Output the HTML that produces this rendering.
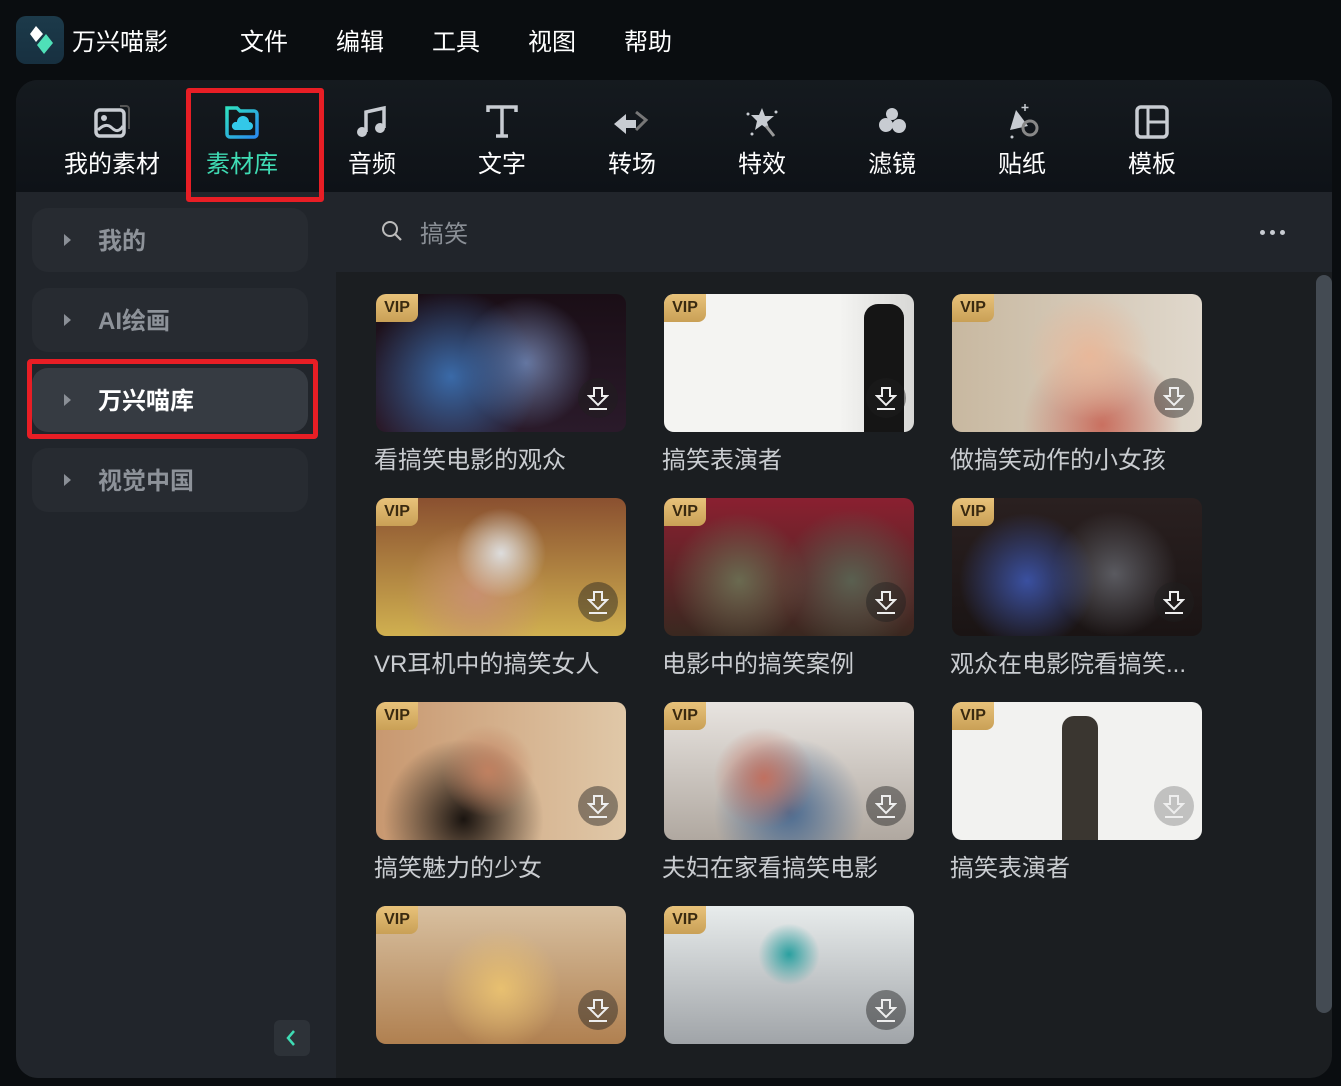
<!DOCTYPE html>
<html><head><meta charset="utf-8"><style>
*{margin:0;padding:0;box-sizing:border-box}
body{width:1341px;height:1086px;background:#0a0d10;font-family:"Liberation Sans","Noto Sans CJK SC",sans-serif;position:relative;overflow:hidden;color:#fff}
.abs{position:absolute}
.menu{top:22px;font-size:24px;color:#fff}
.panel{left:16px;top:80px;width:1316px;height:998px;border-radius:22px;overflow:hidden;background:#1b1e21}
.tool{left:0;top:0;width:1316px;height:112px;background:linear-gradient(#151a1f,#0e1217)}
.ti{position:absolute;top:0;width:120px;height:112px;text-align:center}
.ti svg{position:absolute;left:40px;top:22px}
.ti span{position:absolute;left:0;right:0;top:64px;font-size:24px;color:#fff}
.side{left:0;top:112px;width:320px;height:886px;background:#21252b}
.si{position:absolute;left:16px;width:276px;height:64px;border-radius:16px;background:#272b31}
.si i{position:absolute;left:32px;top:26px;width:0;height:0;border-left:7px solid #8a8f96;border-top:6px solid transparent;border-bottom:6px solid transparent}
.si b{position:absolute;left:66px;top:13px;font-size:24px;color:#8d9299}
.search{left:320px;top:112px;width:996px;height:80px;background:#21252b}
.card{position:absolute;width:250px;height:138px;border-radius:10px;overflow:hidden}
.vip{position:absolute;left:0;top:0;width:42px;height:28px;background:linear-gradient(#e8c27a,#c9a056);color:#3a2a10;font-weight:bold;font-size:16px;line-height:28px;text-align:center;border-radius:4px 0 8px 0}
.dl{position:absolute;right:8px;bottom:14px;width:40px;height:40px;border-radius:50%;background:rgba(30,30,30,.45)}
.dl svg{position:absolute;left:9px;top:8px}
.cap{position:absolute;font-size:24px;color:#c9ccd0;white-space:nowrap}
</style></head><body>
<div class="abs" style="left:16px;top:16px;width:48px;height:48px;border-radius:10px;background:linear-gradient(#1c3a4a,#173040)">
<svg width="48" height="48"><path d="M20 10 L27 18 L20 26 L14 18Z" fill="#fff"/><path d="M30 18 L37 27 L28 38 L21 29Z" fill="#4fe0b8"/></svg></div>
<div class="abs menu" style="left:72px">万兴喵影</div>
<div class="abs menu" style="left:240px">文件</div>
<div class="abs menu" style="left:336px">编辑</div>
<div class="abs menu" style="left:432px">工具</div>
<div class="abs menu" style="left:528px">视图</div>
<div class="abs menu" style="left:624px">帮助</div>

<div class="abs panel">
 <div class="abs tool">
  <div class="ti" style="left:36px"><svg width="40" height="40"><rect x="4" y="8" width="28" height="26" rx="4" fill="none" stroke="#c8ccd2" stroke-width="3.5"/><circle cx="12" cy="16" r="3" fill="#c8ccd2"/><path d="M6 28 Q14 20 20 26 T31 24" fill="none" stroke="#c8ccd2" stroke-width="3"/><path d="M28 4 h6 a3 3 0 0 1 3 3 v20" fill="none" stroke="#555" stroke-width="2"/></svg><span>我的素材</span></div>
  <div class="ti" style="left:166px"><svg width="40" height="40"><defs><linearGradient id="g" x1="0" y1="0" x2="1" y2="1"><stop offset="0" stop-color="#2ee0c0"/><stop offset="1" stop-color="#2a8af0"/></linearGradient></defs><path d="M5 6 h10 l3 3 h14 a3 3 0 0 1 3 3 v20 a3 3 0 0 1 -3 3 h-24 a3 3 0 0 1 -3 -3z" fill="none" stroke="url(#g)" stroke-width="3.5"/><path d="M13 28 h14 a4 4 0 0 0 0 -8 a6 6 0 0 0 -12 0 a4 4 0 0 0 -2 8z" fill="#33c8e8"/></svg><span style="color:#3fdcb4">素材库</span></div>
  <div class="ti" style="left:296px"><svg width="40" height="40"><path d="M14 30 V10 L32 6 V26" fill="none" stroke="#c8ccd2" stroke-width="3.5"/><circle cx="10" cy="30" r="5" fill="#c8ccd2"/><circle cx="28" cy="26" r="5" fill="#c8ccd2"/></svg><span>音频</span></div>
  <div class="ti" style="left:426px"><svg width="40" height="40"><path d="M6 10 V5 H34 V10 M20 5 V34 M14 34 H26" fill="none" stroke="#c8ccd2" stroke-width="3.5"/></svg><span>文字</span></div>
  <div class="ti" style="left:556px"><svg width="40" height="40"><path d="M2 22 L14 12 V18 H24 V26 H14 V32Z" fill="#c8ccd2"/><path d="M24 10 L34 18 L24 28" fill="none" stroke="#777" stroke-width="3"/></svg><span>转场</span></div>
  <div class="ti" style="left:686px"><svg width="40" height="40"><path d="M20 6 L23 14 L32 14 L25 20 L28 29 L20 23 L13 28 L15 19 L9 13 L17 13Z" fill="#c8ccd2"/><path d="M24 24 L32 34" stroke="#999" stroke-width="3"/><circle cx="6" cy="12" r="1.5" fill="#c8ccd2"/><circle cx="34" cy="10" r="1.5" fill="#c8ccd2"/><circle cx="10" cy="32" r="1.5" fill="#c8ccd2"/></svg><span>特效</span></div>
  <div class="ti" style="left:816px"><svg width="40" height="40"><circle cx="20" cy="12" r="6" fill="#c8ccd2"/><circle cx="14" cy="23" r="7" fill="#c8ccd2"/><circle cx="27" cy="24" r="7" fill="#c8ccd2"/></svg><span>滤镜</span></div>
  <div class="ti" style="left:946px"><svg width="40" height="40"><path d="M14 8 L26 24 L8 28Z" fill="#c8ccd2"/><circle cx="28" cy="26" r="7" fill="none" stroke="#888" stroke-width="3"/><circle cx="10" cy="35" r="1.5" fill="#c8ccd2"/><path d="M23 2 v7 M19.5 5.5 h7" stroke="#c8ccd2" stroke-width="1.5"/></svg><span>贴纸</span></div>
  <div class="ti" style="left:1076px"><svg width="40" height="40"><rect x="5" y="5" width="30" height="30" rx="4" fill="none" stroke="#c8ccd2" stroke-width="3.5"/><path d="M16 5 V35 M16 20 H35" stroke="#c8ccd2" stroke-width="3"/></svg><span>模板</span></div>
 </div>
 <div class="abs side">
  <div class="si" style="top:16px"><i></i><b>我的</b></div>
  <div class="si" style="top:96px"><i></i><b>AI绘画</b></div>
  <div class="si" style="top:176px;background:#363b42"><i></i><b style="color:#fff">万兴喵库</b></div>
  <div class="si" style="top:256px"><i></i><b>视觉中国</b></div>
  <div class="abs" style="left:258px;top:828px;width:36px;height:36px;border-radius:6px;background:#2d3238"><svg width="36" height="36"><path d="M20 11 L14 18 L20 25" fill="none" stroke="#3fdcb4" stroke-width="2.5"/></svg></div>
 </div>
 <div class="abs" style="left:170px;top:8px;width:138px;height:114px;border:5px solid #e81e25;border-radius:3px;z-index:5"></div>
 <div class="abs" style="left:11px;top:279px;width:291px;height:80px;border:5px solid #e81e25;border-radius:4px;z-index:5"></div>
 <div class="abs search">
  <svg class="abs" style="left:44px;top:27px" width="26" height="26"><circle cx="10" cy="10" r="7" fill="none" stroke="#bbb" stroke-width="2"/><path d="M15 15 L21 21" stroke="#bbb" stroke-width="2.2"/></svg>
  <div class="abs" style="left:84px;top:22px;font-size:24px;color:#8a8f96">搞笑</div>
  <div class="abs" style="left:924px;top:38px;width:5px;height:5px;border-radius:50%;background:#c8ccd2;box-shadow:10px 0 #c8ccd2,20px 0 #c8ccd2"></div>
 </div>
 <div class="abs" style="left:1300px;top:195px;width:16px;height:738px;border-radius:8px;background:#444b53"></div>
 <div class="abs" style="left:320px;top:192px;width:980px;height:784px;overflow:hidden">
  <div class="card" style="left:40px;top:22px;background:radial-gradient(circle at 30% 60%,#3a6aa8,transparent 45%),radial-gradient(circle at 60% 50%,#6a78a0,transparent 40%),linear-gradient(#1a0e16,#2a1a2a)"><div class="vip">VIP</div><div class="dl"><svg width="22" height="24"><path d="M7 2 h8 v8 h5 l-9 9 l-9 -9 h5z" fill="none" stroke="#eee" stroke-width="2"/><path d="M2 23 h18" stroke="#eee" stroke-width="2"/></svg></div></div>
  <div class="cap" style="left:38px;top:168px">看搞笑电影的观众</div>
  <div class="card" style="left:328px;top:22px;background:linear-gradient(90deg,#f4f4f2 70%,#d8d8d6)"><div class="abs" style="left:200px;top:10px;width:40px;height:128px;background:#151515;border-radius:14px 14px 0 0"></div><div class="vip">VIP</div><div class="dl"><svg width="22" height="24"><path d="M7 2 h8 v8 h5 l-9 9 l-9 -9 h5z" fill="none" stroke="#eee" stroke-width="2"/><path d="M2 23 h18" stroke="#eee" stroke-width="2"/></svg></div></div>
  <div class="cap" style="left:326px;top:168px">搞笑表演者</div>
  <div class="card" style="left:616px;top:22px;background:radial-gradient(circle at 55% 45%,#e8b89a,transparent 40%),radial-gradient(circle at 60% 95%,#c97060,transparent 40%),linear-gradient(90deg,#c8b8a0,#e0d8cc)"><div class="vip">VIP</div><div class="dl"><svg width="22" height="24"><path d="M7 2 h8 v8 h5 l-9 9 l-9 -9 h5z" fill="none" stroke="#eee" stroke-width="2"/><path d="M2 23 h18" stroke="#eee" stroke-width="2"/></svg></div></div>
  <div class="cap" style="left:614px;top:168px">做搞笑动作的小女孩</div>

  <div class="card" style="left:40px;top:226px;background:radial-gradient(circle at 50% 40%,#ddd,transparent 30%),radial-gradient(circle at 40% 70%,#c89070,transparent 40%),linear-gradient(#8a5030,#d0b050)"><div class="vip">VIP</div><div class="dl"><svg width="22" height="24"><path d="M7 2 h8 v8 h5 l-9 9 l-9 -9 h5z" fill="none" stroke="#eee" stroke-width="2"/><path d="M2 23 h18" stroke="#eee" stroke-width="2"/></svg></div></div>
  <div class="cap" style="left:38px;top:372px">VR耳机中的搞笑女人</div>
  <div class="card" style="left:328px;top:226px;background:radial-gradient(circle at 30% 60%,#6a6a50,transparent 35%),radial-gradient(circle at 75% 60%,#5a6050,transparent 35%),linear-gradient(#8a2030,#3a2820)"><div class="vip">VIP</div><div class="dl"><svg width="22" height="24"><path d="M7 2 h8 v8 h5 l-9 9 l-9 -9 h5z" fill="none" stroke="#eee" stroke-width="2"/><path d="M2 23 h18" stroke="#eee" stroke-width="2"/></svg></div></div>
  <div class="cap" style="left:326px;top:372px">电影中的搞笑案例</div>
  <div class="card" style="left:616px;top:226px;background:radial-gradient(circle at 30% 60%,#3a50a0,transparent 35%),radial-gradient(circle at 65% 55%,#5a5a60,transparent 35%),linear-gradient(#2a2020,#1a1414)"><div class="vip">VIP</div><div class="dl"><svg width="22" height="24"><path d="M7 2 h8 v8 h5 l-9 9 l-9 -9 h5z" fill="none" stroke="#eee" stroke-width="2"/><path d="M2 23 h18" stroke="#eee" stroke-width="2"/></svg></div></div>
  <div class="cap" style="left:614px;top:372px">观众在电影院看搞笑...</div>

  <div class="card" style="left:40px;top:430px;background:radial-gradient(circle at 45% 50%,#c08060,transparent 30%),radial-gradient(circle at 35% 85%,#1a1410,transparent 40%),linear-gradient(90deg,#c89870,#e0c8a8)"><div class="vip">VIP</div><div class="dl"><svg width="22" height="24"><path d="M7 2 h8 v8 h5 l-9 9 l-9 -9 h5z" fill="none" stroke="#eee" stroke-width="2"/><path d="M2 23 h18" stroke="#eee" stroke-width="2"/></svg></div></div>
  <div class="cap" style="left:38px;top:576px">搞笑魅力的少女</div>
  <div class="card" style="left:328px;top:430px;background:radial-gradient(circle at 40% 55%,#c07060,transparent 30%),radial-gradient(circle at 50% 80%,#4a6a90,transparent 45%),linear-gradient(#e8e4e0,#b0a8a0)"><div class="vip">VIP</div><div class="dl"><svg width="22" height="24"><path d="M7 2 h8 v8 h5 l-9 9 l-9 -9 h5z" fill="none" stroke="#eee" stroke-width="2"/><path d="M2 23 h18" stroke="#eee" stroke-width="2"/></svg></div></div>
  <div class="cap" style="left:326px;top:576px">夫妇在家看搞笑电影</div>
  <div class="card" style="left:616px;top:430px;background:#f2f2f0"><div class="abs" style="left:110px;top:14px;width:36px;height:124px;background:#3a3630;border-radius:12px 12px 0 0"></div><div class="vip">VIP</div><div class="dl" style="background:rgba(160,160,160,.6)"><svg width="22" height="24"><path d="M7 2 h8 v8 h5 l-9 9 l-9 -9 h5z" fill="none" stroke="#eee" stroke-width="2"/><path d="M2 23 h18" stroke="#eee" stroke-width="2"/></svg></div></div>
  <div class="cap" style="left:614px;top:576px">搞笑表演者</div>

  <div class="card" style="left:40px;top:634px;background:radial-gradient(circle at 50% 60%,#e8c070,transparent 40%),linear-gradient(#d8c0a0,#b08050)"><div class="vip">VIP</div><div class="dl"><svg width="22" height="24"><path d="M7 2 h8 v8 h5 l-9 9 l-9 -9 h5z" fill="none" stroke="#eee" stroke-width="2"/><path d="M2 23 h18" stroke="#eee" stroke-width="2"/></svg></div></div>
  <div class="card" style="left:328px;top:634px;background:radial-gradient(circle at 50% 35%,#2aa0a0,transparent 20%),linear-gradient(#e8ecec,#a0a4a8)"><div class="vip">VIP</div><div class="dl"><svg width="22" height="24"><path d="M7 2 h8 v8 h5 l-9 9 l-9 -9 h5z" fill="none" stroke="#eee" stroke-width="2"/><path d="M2 23 h18" stroke="#eee" stroke-width="2"/></svg></div></div>
 </div>
</div>
</body></html>
